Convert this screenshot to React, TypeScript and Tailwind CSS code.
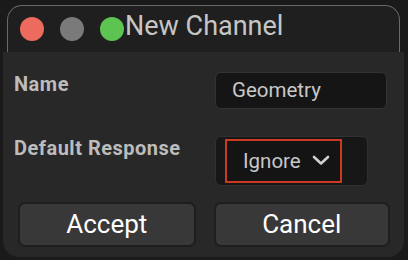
import React from 'react';

export default function App() {
  return (
    <div className="w-[408px] h-[260px] bg-[#1a1a1a] overflow-hidden flex flex-col" style={{ fontFamily: 'Roboto, "Liberation Sans", sans-serif' }}>
      <div className="mt-[5px] ml-[7px] mr-[8px] h-[47px] shrink-0 rounded-t-[15px] border-t border-x border-[#6a6a6a] bg-[#1f1f1f] flex items-center pl-[12px]">
        <span className="w-[24px] h-[24px] rounded-full bg-[#ec6a5e]" />
        <span className="w-[24px] h-[24px] rounded-full bg-[#7a7a7a] ml-[16px]" />
        <span className="w-[24px] h-[24px] rounded-full bg-[#5dc452] ml-[16px]" />
        <span className="text-[27px] leading-none text-[#c6c6c6] ml-[1px] -mt-[5px]">New Channel</span>
      </div>
      <div className="ml-[3px] mr-[4px] h-[205px] shrink-0 rounded-b-[16px] bg-[#282828] flex flex-col px-[14px] pt-[20px]">
        <div className="flex items-center justify-between h-[37px]">
          <span className="text-[20px] font-bold tracking-[0.5px] text-[#bcbcbc] -ml-[3px] -mt-[14px]">Name</span>
          <div className="w-[172px] h-[37px] mr-[3px] rounded-[6px] bg-[#151515] border border-[#333] flex items-center pl-[16px] text-[20.5px] text-[#c8c8c8]">Geometry</div>
        </div>
        <div className="flex items-center justify-between h-[50px] mt-[27px]">
          <span className="text-[20px] font-bold tracking-[0.5px] text-[#bcbcbc] -ml-[3px] -mt-[26px]">Default Response</span>
          <div className="w-[153px] h-[50px] mr-[22px] rounded-[6px] bg-[#171717] border border-[#303030] flex items-center pl-[9px]">
            <div className="w-[117px] h-[44px] border-2 border-[#c93a20] bg-[#141414] flex items-center pl-[16px] gap-[11px] text-[20.5px] text-[#c8c8c8]">
              <span>Ignore</span>
              <svg width="18" height="12" viewBox="0 0 18 12" className="mb-[2px]"><path d="M2 3 L9 9.5 L16 3" fill="none" stroke="#d0d0d0" strokeWidth="2.6" strokeLinecap="round" strokeLinejoin="round" /></svg>
            </div>
          </div>
        </div>
        <div className="flex gap-[18px] mt-[16px] pl-[1px]">
          <button className="w-[178px] h-[45px] rounded-[7px] bg-[#383838] border-2 border-[#1e1e1e] text-[26px] text-white flex items-center justify-center">Accept</button>
          <button className="w-[177px] h-[45px] rounded-[7px] bg-[#383838] border-2 border-[#1e1e1e] text-[26px] text-white flex items-center justify-center">Cancel</button>
        </div>
      </div>
    </div>
  );
}
